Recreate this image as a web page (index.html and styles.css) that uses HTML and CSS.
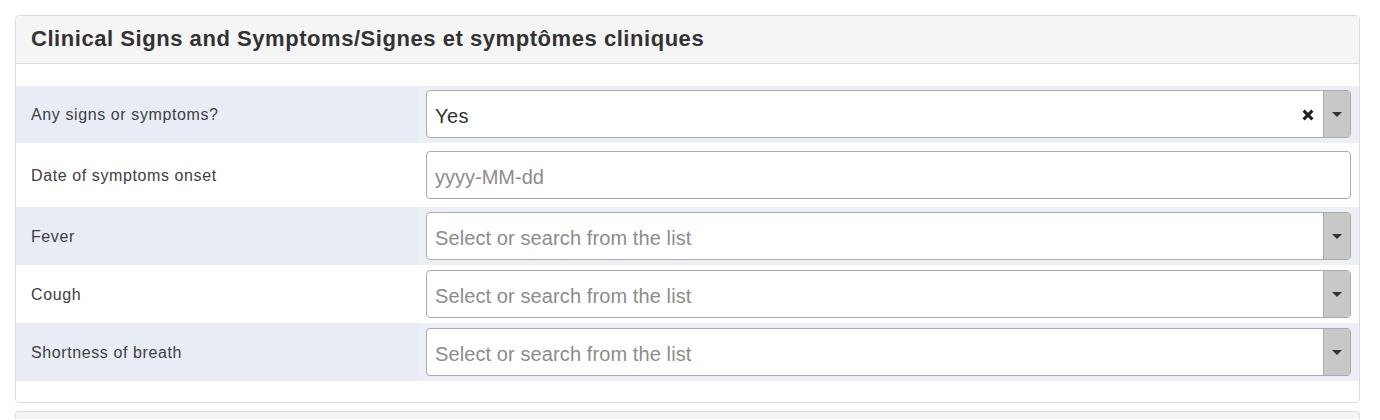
FILE: index.html
```html
<!DOCTYPE html>
<html>
<head>
<meta charset="utf-8">
<link rel="stylesheet" href="styles.css">
</head>
<body>
<div class="panel">
  <div class="panel-heading">
    <h3 class="panel-title">Clinical Signs and Symptoms/Signes et symptômes cliniques</h3>
  </div>
  <div class="panel-body">
    <div class="row row-first striped">
      <div class="label">Any signs or symptoms?</div>
      <div class="field">
        <div class="select">
          <span class="value">Yes</span>
          <span class="clear">
            <svg width="12" height="12" viewBox="0 0 12 12"><path d="M1.6 1.6 L10.4 10.4 M10.4 1.6 L1.6 10.4" stroke="#222" stroke-width="3" stroke-linecap="butt"/></svg>
          </span>
          <span class="arrow"><span class="caret"></span></span>
        </div>
      </div>
    </div>
    <div class="row row-date">
      <div class="label">Date of symptoms onset</div>
      <div class="field">
        <div class="input"><span class="placeholder">yyyy-MM-dd</span></div>
      </div>
    </div>
    <div class="row striped">
      <div class="label">Fever</div>
      <div class="field">
        <div class="select">
          <span class="placeholder">Select or search from the list</span>
          <span class="arrow"><span class="caret"></span></span>
        </div>
      </div>
    </div>
    <div class="row">
      <div class="label">Cough</div>
      <div class="field">
        <div class="select">
          <span class="placeholder">Select or search from the list</span>
          <span class="arrow"><span class="caret"></span></span>
        </div>
      </div>
    </div>
    <div class="row striped">
      <div class="label">Shortness of breath</div>
      <div class="field">
        <div class="select">
          <span class="placeholder">Select or search from the list</span>
          <span class="arrow"><span class="caret"></span></span>
        </div>
      </div>
    </div>
  </div>
</div>
<div class="panel panel-next"></div>
</body>
</html>
```

FILE: styles.css
```css
html, body {
  margin: 0;
  padding: 0;
  background: #fff;
  overflow: hidden;
}
body {
  padding: 15px 20px 0 15px;
  font-family: "Liberation Sans", Arial, sans-serif;
  color: #333;
  height: 420px;
  box-sizing: border-box;
}
.panel {
  border: 1px solid #dddddd;
  border-radius: 4px;
  background: #fff;
}
.panel-heading {
  height: 47px;
  background: #f5f5f5;
  border-bottom: 1px solid #dddddd;
  border-radius: 3px 3px 0 0;
  display: flex;
  align-items: center;
  padding: 0 15px;
}
.panel-title {
  margin: 0;
  font-size: 22px;
  letter-spacing: 0.55px;
  font-weight: bold;
  color: #333;
  position: relative;
  top: -1px;
}
.panel-body {
  padding: 22px 0 21px 0;
}
.row {
  display: flex;
  height: 58px;
}
.row.striped {
  background: #ecf0f6;
}
.row.striped .label {
  background: #e8edf5;
}
.label {
  width: 388px;
  padding-left: 15px;
  padding-top: 1px;
  display: flex;
  align-items: center;
  font-size: 16px;
  letter-spacing: 0.6px;
  color: #404040;
}
.field {
  flex: 1;
  padding: 5px 8px 0 7px;
}
.row-first {
  height: 57px;
}
.row-first .field {
  padding-top: 4px;
}
.row-date {
  height: 64px;
}
.row-date .field {
  padding-top: 8px;
}
.select, .input {
  height: 48px;
  box-sizing: border-box;
  border: 1px solid #aaaaaa;
  border-radius: 4px;
  background: #fff;
  display: flex;
  align-items: center;
  font-size: 20px;
  overflow: hidden;
}
.value, .placeholder {
  padding-left: 8px;
  padding-top: 4px;
  flex: 1;
  white-space: nowrap;
}
.value {
  color: #333;
  font-size: 20px;
  letter-spacing: 0.4px;
}
.placeholder {
  color: #8c8c8c;
  letter-spacing: 0.1px;
}
.input .placeholder {
  font-size: 20px;
  letter-spacing: 0;
}
.clear {
  width: 12px;
  height: 12px;
  margin-right: 9px;
  display: flex;
  position: relative;
  top: 1px;
}
.arrow {
  width: 26px;
  align-self: stretch;
  background: #c8c8c8;
  border-left: 1px solid #aaaaaa;
  display: flex;
  align-items: center;
  justify-content: center;
}
.caret {
  width: 0;
  height: 0;
  border-left: 5px solid transparent;
  border-right: 5px solid transparent;
  border-top: 5px solid #333;
}
.panel-next {
  margin-top: 8px;
  height: 7px;
  background: #f5f5f5;
  border-bottom: none;
  border-radius: 4px 4px 0 0;
}
```
